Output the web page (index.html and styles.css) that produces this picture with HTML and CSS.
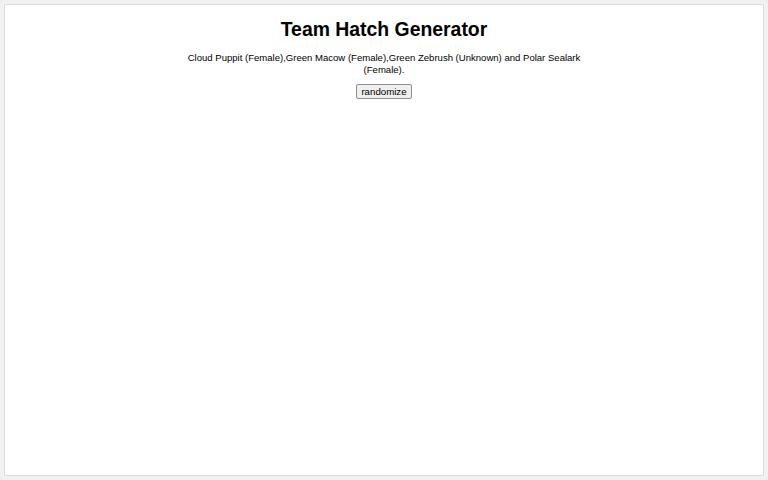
FILE: index.html
```html
<!DOCTYPE html>
<html>
<head>
<meta charset="utf-8">
<link rel="stylesheet" href="styles.css">
</head>
<body>
<div class="panel">
  <h1 class="title">Team Hatch Generator</h1>
  <p class="result">Cloud Puppit (Female),Green Macow (Female),Green Zebrush (Unknown) and Polar Sealark (Female).</p>
  <button class="btn">randomize</button>
</div>
</body>
</html>
```
FILE: styles.css
```css
html, body { margin: 0; padding: 0; }
body {
  background: #f2f2f2;
  padding: 4px 4px 4px 4px;
  font-family: "Liberation Sans", Arial, sans-serif;
  height: 480px;
  box-sizing: border-box;
}
.panel {
  background: #fff;
  border: 1px solid #dcdcdc;
  height: 472px;
  box-sizing: border-box;
  display: flex;
  flex-direction: column;
  align-items: center;
}
.title {
  font-size: 19.4px;
  font-weight: bold;
  margin: 13px 0 0 0;
  line-height: 22px;
  color: #000;
}
.result {
  font-size: 9.55px;
  line-height: 12px;
  width: 400px;
  text-align: center;
  margin: 12px 0 0 0;
  color: #000;
}
.btn {
  margin-top: 8px;
  font-family: "Liberation Sans", Arial, sans-serif;
  font-size: 9.7px;
  padding: 1px 4px;
  background: #efefef;
  border: 1px solid #8f8f8f;
  border-radius: 2px;
  color: #000;
}
```
